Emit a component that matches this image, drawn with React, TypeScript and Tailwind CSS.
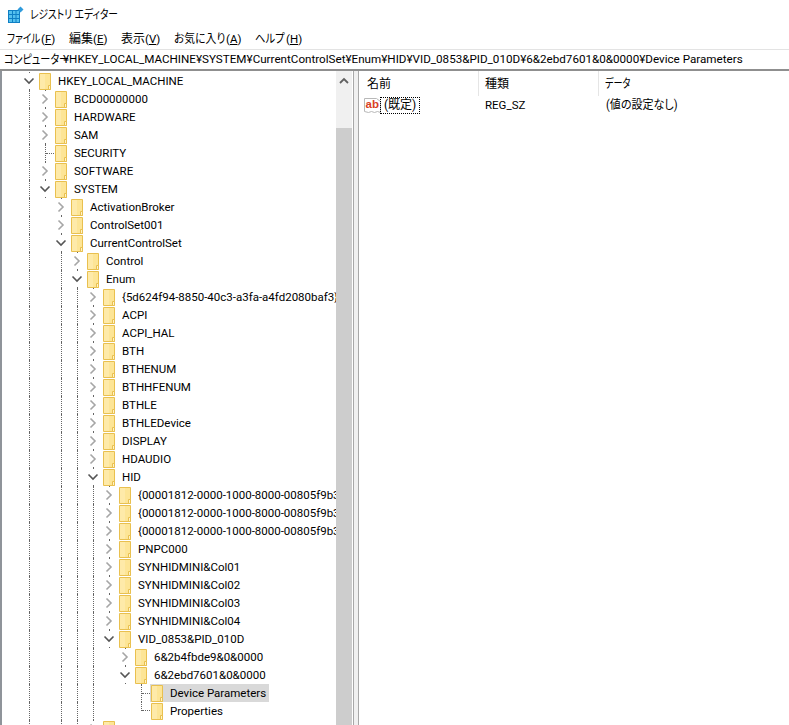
import React from 'react';

type Node = {
  label: string;
  state: 'open' | 'closed' | 'leaf';
  level: number;
  guides: number[];
  selected?: boolean;
  last?: boolean;
};

const sans = "font-['Roboto','Noto_Sans_CJK_JP',sans-serif] [font-feature-settings:'palt']";

// guide columns that run through every row of a branch
const root = [0];
const hk = [0, 1];
const sys = [0];
const ccs = [0, 2];
const en = [0, 2, 3];
const hid = [0, 2, 3, 4];

const rows: Node[] = [
  { label: 'HKEY_LOCAL_MACHINE', state: 'open', level: 0, guides: root },
  { label: 'BCD00000000', state: 'closed', level: 1, guides: hk },
  { label: 'HARDWARE', state: 'closed', level: 1, guides: hk },
  { label: 'SAM', state: 'closed', level: 1, guides: hk },
  { label: 'SECURITY', state: 'leaf', level: 1, guides: hk },
  { label: 'SOFTWARE', state: 'closed', level: 1, guides: hk },
  { label: 'SYSTEM', state: 'open', level: 1, guides: hk },
  { label: 'ActivationBroker', state: 'closed', level: 2, guides: sys },
  { label: 'ControlSet001', state: 'closed', level: 2, guides: sys },
  { label: 'CurrentControlSet', state: 'open', level: 2, guides: sys },
  { label: 'Control', state: 'closed', level: 3, guides: ccs },
  { label: 'Enum', state: 'open', level: 3, guides: ccs },
  { label: '{5d624f94-8850-40c3-a3fa-a4fd2080baf3}', state: 'closed', level: 4, guides: en },
  { label: 'ACPI', state: 'closed', level: 4, guides: en },
  { label: 'ACPI_HAL', state: 'closed', level: 4, guides: en },
  { label: 'BTH', state: 'closed', level: 4, guides: en },
  { label: 'BTHENUM', state: 'closed', level: 4, guides: en },
  { label: 'BTHHFENUM', state: 'closed', level: 4, guides: en },
  { label: 'BTHLE', state: 'closed', level: 4, guides: en },
  { label: 'BTHLEDevice', state: 'closed', level: 4, guides: en },
  { label: 'DISPLAY', state: 'closed', level: 4, guides: en },
  { label: 'HDAUDIO', state: 'closed', level: 4, guides: en },
  { label: 'HID', state: 'open', level: 4, guides: en },
  { label: '{00001812-0000-1000-8000-00805f9b34fb}', state: 'closed', level: 5, guides: hid },
  { label: '{00001812-0000-1000-8000-00805f9b34fb}', state: 'closed', level: 5, guides: hid },
  { label: '{00001812-0000-1000-8000-00805f9b34fb}', state: 'closed', level: 5, guides: hid },
  { label: 'PNPC000', state: 'closed', level: 5, guides: hid },
  { label: 'SYNHIDMINI&Col01', state: 'closed', level: 5, guides: hid },
  { label: 'SYNHIDMINI&Col02', state: 'closed', level: 5, guides: hid },
  { label: 'SYNHIDMINI&Col03', state: 'closed', level: 5, guides: hid },
  { label: 'SYNHIDMINI&Col04', state: 'closed', level: 5, guides: hid },
  { label: 'VID_0853&PID_010D', state: 'open', level: 5, guides: hid },
  { label: '6&2b4fbde9&0&0000', state: 'closed', level: 6, guides: hid },
  { label: '6&2ebd7601&0&0000', state: 'open', level: 6, guides: hid },
  { label: 'Device Parameters', state: 'leaf', level: 7, guides: hid, selected: true },
  { label: 'Properties', state: 'leaf', level: 7, guides: hid, last: true },
  { label: 'NTPRO', state: 'closed', level: 4, guides: en },
];

const Folder = () => (
  <svg width="13" height="17" viewBox="0 0 13 17" className="shrink-0">
    <path d="M.5.5h11v16H.5z" fill="#fde596" stroke="#e9c04f" />
    <path d="M1 1h5v15H1z" fill="#fff0bb" opacity="0.5" />
    <path d="M9.500 16.500v-4h2v4z" fill="#fff3c9" stroke="#e9c04f" />
  </svg>
);

const Chevron = ({ open }: { open: boolean }) =>
  open ? (
    <svg width="12" height="12" viewBox="0 0 12 12">
      <path d="M1.500 3.500 6 8l4.500-4.500" fill="none" stroke="#555" strokeWidth="1.600" />
    </svg>
  ) : (
    <svg width="12" height="12" viewBox="0 0 12 12">
      <path d="M3.500 1.500 8 6l-4.500 4.500" fill="none" stroke="#a6a6a6" strokeWidth="1.600" />
    </svg>
  );

const AppIcon = () => (
  <svg width="16" height="17" viewBox="0 0 16 17">
    <path d="M0 4h12v13H0z" fill="#0f7fc4" />
    <path d="M1 5h3v3H1zM5 5h2.500v3H5zM8.500 5H11v3H8.500zM1 9h3v3H1zM5 9h2.500v3H5zM8.500 9H11v3H8.500zM1 13h3v3H1zM5 13h2.500v3H5zM8.500 13H11v3H8.500z" fill="#55c1ee" />
    <path d="m12.500.5 3 3-3 3-3-3z" fill="#2f9bdc" />
  </svg>
);

const AbIcon = () => (
  <svg width="17" height="17" viewBox="0 0 17 17" className="shrink-0">
    <path d="M.5 1.500h12l4 3v11l-3-1-3 1-3-1-3 1-4-1z" fill="#fff" stroke="#b8b8b8" />
    <text x="1.500" y="11" fontSize="11.500" fontWeight="700" fill="#d9401f" fontFamily="Liberation Sans, sans-serif">ab</text>
  </svg>
);

const TreeRow = ({ node }: { node: Node }) => {
  const isGuide = (i: number) => node.guides.includes(i);
  return (
    <div className="flex h-[18px] items-center">
      <div className="w-[23px] shrink-0" />
      {Array.from({ length: node.level }).map((_, i) => (
        <div key={i} className="w-4 h-full shrink-0">
          {isGuide(i) && <div className="h-full w-0 ml-[6px] border-l border-dotted border-[#666]" />}
        </div>
      ))}
      <div className="w-4 h-full shrink-0 relative">
        {node.state === 'leaf' ? (
          <div className={`flex ml-[6px] border-l border-dotted border-[#666] ${node.last ? 'h-[9px] items-end' : 'h-full items-center'}`}>
            <div className="w-[8px] border-t border-dotted border-[#666]" />
          </div>
        ) : (
          <>
            <div className="h-full w-0 ml-[6px] border-l border-dotted border-[#666]" />
            <div className="absolute left-0 top-px bg-white h-4 flex items-center">
              <Chevron open={node.state === 'open'} />
            </div>
          </>
        )}
      </div>
      {node.selected ? (
        <div className="flex items-center h-full bg-[#d9d9d9] -ml-px pl-px pr-[3px]">
          <Folder />
          <span className="ml-[6px] pt-[2px] whitespace-nowrap">{node.label}</span>
        </div>
      ) : (
        <>
          <Folder />
          <span className="ml-[6px] pt-[2px] whitespace-nowrap">{node.label}</span>
        </>
      )}
    </div>
  );
};

export default function App() {
  return (
    <div className={`w-[789px] h-[725px] overflow-hidden bg-white flex flex-col text-[11.5px] text-black ${sans}`}>
      <div className="h-[29px] flex items-center pl-2 gap-[6px] shrink-0">
        <AppIcon />
        <span className="inline-block w-[88px] origin-left scale-x-[0.81] whitespace-nowrap text-[12px]">レジストリ エディター</span>
      </div>
      <div className="h-[20px] flex items-center pl-[7px] shrink-0 whitespace-nowrap">
        <div className="w-[62px]">
          <span className="inline-block w-[34px] origin-left scale-x-[0.8] text-[12px]">ファイル</span>(<span className="underline">F</span>)
        </div>
        <div className="w-[52px]">
          <span className="text-[12px]">編集</span>(<span className="underline">E</span>)
        </div>
        <div className="w-[53px]">
          <span className="text-[12px]">表示</span>(<span className="underline">V</span>)
        </div>
        <div className="w-[81px]">
          <span className="inline-block w-[52px] origin-left scale-x-[0.9] text-[12px]">お気に入り</span>(<span className="underline">A</span>)
        </div>
        <div className="w-[60px]">
          <span className="inline-block w-[31px] origin-left scale-x-[0.86] text-[12px]">ヘルプ</span>(<span className="underline">H</span>)
        </div>
      </div>
      <div className="h-[22px] shrink-0 border-t border-[#e3e3e3] border-b-2 border-b-[#8f8f8f] pl-1 pt-px flex items-center whitespace-nowrap text-[11.65px]">
        <span className="inline-block w-[59px] origin-left scale-x-[0.84] text-[12px]">コンピューター</span>
        <span>¥HKEY_LOCAL_MACHINE¥SYSTEM¥CurrentControlSet¥Enum¥HID¥VID_0853&PID_010D¥6&2ebd7601&0&0000¥Device Parameters</span>
      </div>
      <div className="flex flex-1 min-h-0">
        <div className="w-[336px] shrink-0 overflow-hidden border-l-2 border-[#8f949a]">
          <div className="-ml-[2px] pt-px">
            {rows.map((r, i) => (
              <TreeRow key={i} node={r} />
            ))}
          </div>
        </div>
        <div className="w-4 shrink-0 bg-[#f0f0f0] flex flex-col items-center">
          <div className="h-[57px] shrink-0 flex justify-center pt-[6px]">
            <svg width="10" height="8" viewBox="0 0 10 8">
              <path d="M1 6l4-4 4 4" fill="none" stroke="#606060" strokeWidth="1.800" />
            </svg>
          </div>
          <div className="flex-1 w-full bg-[#cdcdcd]" />
        </div>
        <div className="w-[1px] shrink-0" />
        <div className="w-px shrink-0 bg-[#a8a8a8]" />
        <div className="w-[4px] shrink-0 bg-[#f0f0f0]" />
        <div className="w-px shrink-0 bg-[#a8a8a8]" />
        <div className="flex-1 min-w-0">
          <div className="flex h-[25px] items-center text-[12px]">
            <div className="w-[120px] h-full pl-2 flex items-center border-r border-[#e5e5e5]">名前</div>
            <div className="w-[120px] h-full pl-[6px] flex items-center border-r border-[#e5e5e5]">種類</div>
            <div className="ml-[6px] w-[26px] origin-left scale-x-[0.76] whitespace-nowrap">データ</div>
          </div>
          <div className="flex h-[18px] items-center">
            <div className="w-[120px] pl-[5px] flex items-center">
              <AbIcon />
              <span className="border border-dotted border-black px-[3px] leading-[15px] -ml-px text-[12px]">(既定)</span>
            </div>
            <div className="w-[120px] pl-[6px] pt-[2px]">REG_SZ</div>
            <div className="ml-[7px] w-[72px] origin-left scale-x-[0.92] whitespace-nowrap text-[12px]">(値の設定なし)</div>
          </div>
        </div>
      </div>
    </div>
  );
}
